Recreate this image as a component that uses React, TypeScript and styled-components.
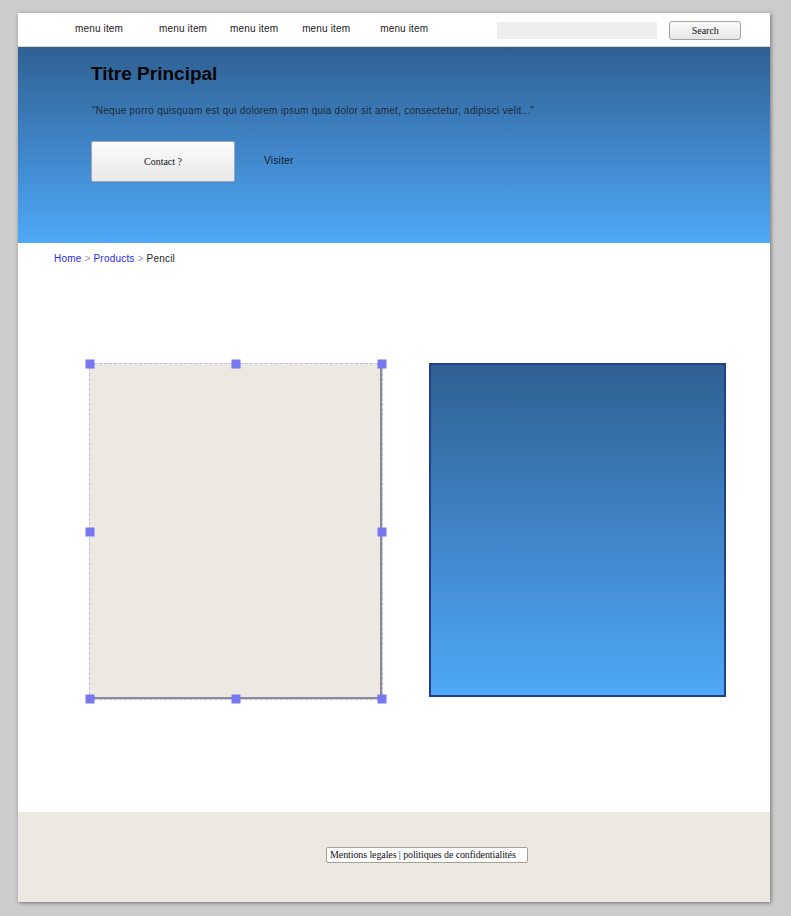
import React from 'react';
import styled, { createGlobalStyle } from 'styled-components';

const GlobalStyle = createGlobalStyle`
  html, body {
    margin: 0;
    padding: 0;
    background: #cccccc;
  }
  body {
    font-family: 'Liberation Sans', Arial, sans-serif;
  }
`;

const Page = styled.div`
  width: 752px;
  margin: 13px 0 14px 18px;
  background: #ffffff;
  box-shadow: 1px 1px 4px rgba(0, 0, 0, 0.45);
  display: flex;
  flex-direction: column;
`;

const Nav = styled.nav`
  height: 34px;
  display: flex;
  align-items: center;
  padding-left: 57px;
  border-bottom: 1px solid #d8d8d8;
  box-sizing: border-box;
`;

const MenuItem = styled.a<{ $gap: number }>`
  margin-left: ${(p) => p.$gap}px;
  font-size: 10px;
  letter-spacing: 0.15px;
  color: #222;
  text-decoration: none;
  line-height: 1;
  margin-top: -1px;
`;

const SearchInput = styled.input`
  margin-left: 69px;
  width: 160px;
  height: 17px;
  border: none;
  background: #eeeeee;
  padding: 0;
  outline: none;
  margin-top: 2px;
`;

const SearchButton = styled.button`
  margin-left: 12px;
  width: 72px;
  height: 19px;
  border: 1px solid #a8a29a;
  border-radius: 3px;
  background: linear-gradient(#fbfbfb, #e6e6e6);
  font-family: 'Liberation Serif', 'Times New Roman', serif;
  font-size: 10px;
  color: #111;
  padding: 0;
  margin-top: 2px;
`;

const Hero = styled.header`
  height: 196px;
  background: linear-gradient(#2f6093, #4fa8f8);
  padding: 16px 0 0 73px;
  box-sizing: border-box;
  display: flex;
  flex-direction: column;
`;

const Title = styled.h1`
  margin: 0;
  font-size: 19px;
  font-weight: bold;
  color: #050505;
  line-height: 22px;
`;

const Quote = styled.p`
  margin: 20px 0 0 1px;
  font-size: 10px;
  letter-spacing: 0.25px;
  color: #1c2a3a;
  line-height: 12px;
`;

const Actions = styled.div`
  margin-top: 24px;
  display: flex;
  align-items: center;
`;

const ContactButton = styled.button`
  width: 144px;
  height: 41px;
  border: 1px solid #a0a6ad;
  border-radius: 2px;
  background: linear-gradient(#fbfbfb, #e9e9e9);
  font-family: 'Liberation Serif', 'Times New Roman', serif;
  font-size: 10px;
  color: #111;
  padding: 0;
`;

const VisitLink = styled.a`
  margin-left: 29px;
  font-size: 10px;
  letter-spacing: 0.3px;
  color: #0e1a2a;
  margin-top: -2px;
`;

const Main = styled.main`
  height: 569px;
  display: flex;
  flex-direction: column;
`;

const Breadcrumb = styled.div`
  margin: 10px 0 0 36px;
  font-size: 10px;
  letter-spacing: 0.2px;
  line-height: 12px;
  color: #222;
`;

const Crumb = styled.a`
  color: #2b2bf0;
  text-decoration: none;
`;

const Sep = styled.span`
  color: #999;
`;

const Boxes = styled.div`
  margin-top: 98px;
  display: flex;
  align-items: flex-start;
`;

const SelectedBox = styled.div`
  position: relative;
  margin-left: 71px;
  width: 294px;
  height: 337px;
  box-sizing: border-box;
  background: #ece9e3;
  border: 1px dashed #bcbcf0;
  box-shadow: inset -2px -2px 0 #8a8a96;
`;

const Handle = styled.span<{ $x: string; $y: string }>`
  position: absolute;
  width: 9px;
  height: 9px;
  background: #7777f2;
  left: ${(p) => p.$x};
  top: ${(p) => p.$y};
  transform: translate(-50%, -50%);
`;

const GradientBox = styled.div`
  margin-left: 46px;
  width: 297px;
  height: 334px;
  box-sizing: border-box;
  border: 2px solid #213f8c;
  background: linear-gradient(#2f6093, #4fa8f8);
`;

const Footer = styled.footer`
  height: 90px;
  background: #ece9e3;
  padding: 35px 0 0 308px;
  box-sizing: border-box;
`;

const Legal = styled.div`
  width: 202px;
  height: 16px;
  box-sizing: border-box;
  background: #ffffff;
  border: 1px solid #a89f94;
  border-radius: 2px;
  font-family: 'Liberation Serif', 'Times New Roman', serif;
  font-size: 10px;
  line-height: 14px;
  padding-left: 3px;
  color: #111;
  white-space: nowrap;
  letter-spacing: -0.1px;
`;

const menuGaps = [0, 36, 23, 24, 30];
const handles: [string, string][] = [
  ['0%', '0%'], ['50%', '0%'], ['100%', '0%'],
  ['0%', '50%'], ['100%', '50%'],
  ['0%', '100%'], ['50%', '100%'], ['100%', '100%'],
];

const App: React.FC = () => {
  return (
    <>
      <GlobalStyle />
      <Page>
        <Nav>
          {menuGaps.map((gap, i) => (
            <MenuItem key={i} $gap={gap}>menu item</MenuItem>
          ))}
          <SearchInput />
          <SearchButton>Search</SearchButton>
        </Nav>
        <Hero>
          <Title>Titre Principal</Title>
          <Quote>"Neque porro quisquam est qui dolorem ipsum quia dolor sit amet, consectetur, adipisci velit..."</Quote>
          <Actions>
            <ContactButton>Contact ?</ContactButton>
            <VisitLink>Visiter</VisitLink>
          </Actions>
        </Hero>
        <Main>
          <Breadcrumb>
            <Crumb>Home</Crumb> <Sep>&gt;</Sep> <Crumb>Products</Crumb> <Sep>&gt;</Sep> Pencil
          </Breadcrumb>
          <Boxes>
            <SelectedBox>
              {handles.map(([x, y], i) => (
                <Handle key={i} $x={x} $y={y} />
              ))}
            </SelectedBox>
            <GradientBox />
          </Boxes>
        </Main>
        <Footer>
          <Legal>Mentions legales | politiques de confidentialités</Legal>
        </Footer>
      </Page>
    </>
  );
};

export default App;
